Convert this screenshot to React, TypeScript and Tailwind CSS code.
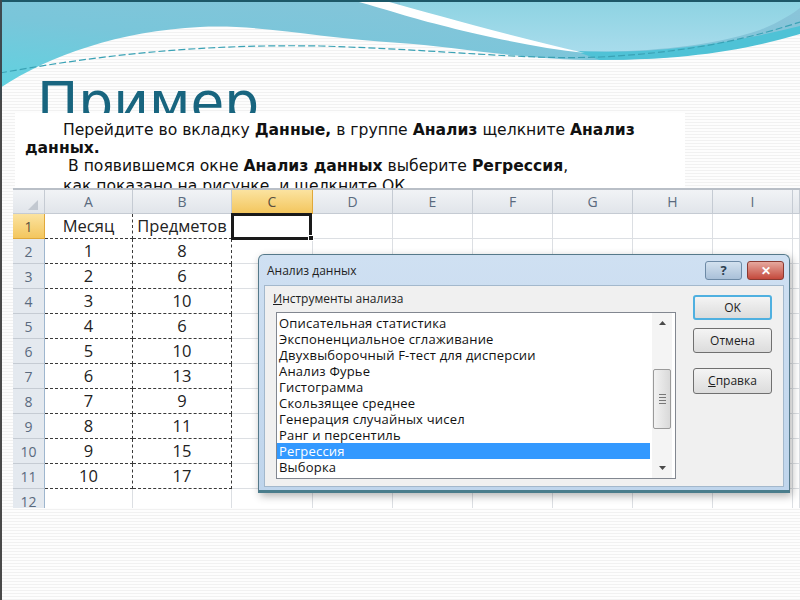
import React from 'react';

const rows: [string, string][] = [
  ['Месяц', 'Предметов'],
  ['1', '8'],
  ['2', '6'],
  ['3', '10'],
  ['4', '6'],
  ['5', '10'],
  ['6', '13'],
  ['7', '9'],
  ['8', '11'],
  ['9', '15'],
  ['10', '17'],
  ['', ''],
];

const tools = [
  'Описательная статистика',
  'Экспоненциальное сглаживание',
  'Двухвыборочный F-тест для дисперсии',
  'Анализ Фурье',
  'Гистограмма',
  'Скользящее среднее',
  'Генерация случайных чисел',
  'Ранг и персентиль',
  'Регрессия',
  'Выборка',
];

const emptyCols = ['D', 'E', 'F', 'G', 'H', 'I', 'J'];

function Wave() {
  return (
    <svg className="absolute left-0 top-0" width="800" height="100" viewBox="0 0 800 100">
      <defs>
        <linearGradient id="cyan" x1="1" y1="0" x2="0" y2="1">
          <stop offset="0" stopColor="#8cc4d9" />
          <stop offset="0.6" stopColor="#79c6da" />
          <stop offset="1" stopColor="#5fd2e0" />
        </linearGradient>
        <linearGradient id="lobe" x1="0" y1="0" x2="0" y2="1">
          <stop offset="0" stopColor="#8dd3e2" />
          <stop offset="1" stopColor="#a8dcec" />
        </linearGradient>
      </defs>
      <path d="M0 0 H800 V30 C740 50 680 60 600 60 C520 60 460 47 400 43 C320 38 260 24 200 27 C120 31 50 55 0 88 Z" fill="url(#cyan)" />
      <path d="M400 6 C460 22 520 40 575 51 C620 53 700 50 760 30 C780 22 792 14 800 8 V0 H400 Z" fill="url(#lobe)" />
      <path d="M575 51 C650 55 730 44 800 26 V34 C740 52 680 60 600 60 Z" fill="#4fc2d6" />
      <path d="M352 0 L382 0 C440 16 510 36 585 53 C520 46 440 26 400 14 C380 8 366 4 352 0 Z" fill="#ffffff" />
      <path d="M0 73 C100 55 200 44 320 46 C450 50 520 60 600 57 C700 52 760 35 800 22" fill="none" stroke="#3aa2b5" strokeWidth="1.2" strokeDasharray="7 3" />
      <rect x="0" y="0" width="800" height="2" fill="#1d5868" />
      <rect x="0" y="0" width="2" height="100" fill="#3e4a50" />
    </svg>
  );
}

function Arrow({ up }: { up?: boolean }) {
  return (
    <svg width="7" height="4" viewBox="0 0 7 4">
      <path d={up ? 'M0 4 L3.5 0 L7 4 Z' : 'M0 0 L3.5 4 L7 0 Z'} fill="#4a4a4a" />
    </svg>
  );
}

function Dialog() {
  return (
    <div className="absolute left-[245px] top-[64px] flex h-[239px] w-[532px] flex-col rounded-t-[6px] border border-[#55798a] border-b-[3px] border-b-[#4a7d8c] bg-[linear-gradient(#cfe0f2,#bfd5ec)] px-[5px] pb-[3px] font-['Open_Sans',sans-serif] shadow-[2px_3px_8px_rgba(0,0,0,0.3)]">
      <div className="flex h-[30px] items-start justify-between">
        <span className="ml-[3px] mt-[8px] text-[12px] leading-[16px] text-[#1e1e1e]">Анализ данных</span>
        <div className="mt-[6px] flex gap-[5px]">
          <div className="flex h-[19px] w-[37px] items-center justify-center rounded-[3px] border border-[#6d8aa6] bg-[linear-gradient(#d3e1ef,#a9c0d8)] text-[13px] font-bold leading-none text-[#2c3e50]">
            ?
          </div>
          <div className="flex h-[19px] w-[37px] items-center justify-center rounded-[3px] border border-[#8a3a32] bg-[linear-gradient(#e6a89e,#c4493c)] text-[12px] font-bold leading-none text-white">
            ✕
          </div>
        </div>
      </div>
      <div className="flex flex-1 border border-[#a3b8cc] bg-[#f0f0f0] pl-[11px]">
        <div className="flex flex-col">
          <div className="-ml-[3px] mt-[5px] text-[12px] leading-[16px] text-[#1e1e1e]">
            <span className="underline">И</span>нструменты анализа
          </div>
          <div className="mt-[5px] flex h-[167px] w-[400px] border border-[#828790] bg-white">
            <div className="w-[373px] pt-[2px] text-[13px] tracking-[0.2px]">
              {tools.map((t) => (
                <div
                  key={t}
                  className={
                    t === 'Регрессия'
                      ? 'h-[16px] bg-[#3399ff] pl-[2px] leading-[16px] text-white'
                      : 'h-[16px] pl-[2px] leading-[16px] text-[#111]'
                  }
                >
                  {t}
                </div>
              ))}
            </div>
            <div className="ml-[2px] flex w-[20px] flex-col items-center bg-[#f4f4f4]">
              <div className="flex h-[20px] items-center">
                <Arrow up />
              </div>
              <div className="mt-[36px] flex h-[60px] w-[18px] flex-col items-center justify-center gap-[2px] rounded-[2px] border border-[#9a9a9a] bg-[linear-gradient(90deg,#f2f2f2,#d9d9d9)]">
                <div className="h-px w-[7px] bg-[#777]" />
                <div className="h-px w-[7px] bg-[#777]" />
                <div className="h-px w-[7px] bg-[#777]" />
                <div className="h-px w-[7px] bg-[#777]" />
              </div>
              <div className="mt-auto flex h-[20px] items-center">
                <Arrow />
              </div>
            </div>
          </div>
        </div>
        <div className="ml-[17px] flex flex-col pt-[9px] text-[12px] text-[#1e1e1e]">
          <div className="flex h-[25px] w-[79px] items-center justify-center rounded-[3px] border-2 border-[#4fb0e0] bg-[linear-gradient(#f4f4f4,#dcdcdc)]">
            OK
          </div>
          <div className="mt-[8px] flex h-[25px] w-[79px] items-center justify-center rounded-[3px] border border-[#707070] bg-[linear-gradient(#f4f4f4,#dcdcdc)]">
            Отмена
          </div>
          <div className="mt-[15px] flex h-[26px] w-[79px] items-center justify-center rounded-[3px] border border-[#707070] bg-[linear-gradient(#f4f4f4,#dcdcdc)]">
            <span>
              <span className="underline">С</span>правка
            </span>
          </div>
        </div>
      </div>
    </div>
  );
}

function Sheet() {
  const head = 'flex items-center justify-center border-r border-b border-[#c5cbd3] bg-[linear-gradient(#f1f3f6,#e1e5ea)] text-[14px] text-[#5a6a7e]';
  const headOn = 'flex items-center justify-center border-r border-b border-[#e0a83a] bg-[linear-gradient(#fbe3a0,#f3c65e)] text-[14px] text-[#5a5040]';
  const rowHead = 'flex items-center justify-center border-r border-b border-r-[#9eb6ce] border-b-[#c5cbd3] bg-[#e4e9ef] text-[14px] text-[#5a6a7e]';
  const grid = 'border-r border-b border-[#dcdfe3] bg-white';
  const data = 'flex items-center justify-center border-r border-b border-dashed border-[#3a3a3a] bg-white text-[16.5px] text-[#222]';

  return (
    <div className="relative ml-[13px] h-[320px] w-[787px] overflow-hidden border-t-2 border-[#b9bfc7] font-['Open_Sans',sans-serif]">
      <div className="grid grid-cols-[32px_88px_99px_81px_80px_80px_80px_80px_80px_80px_7px] grid-rows-[24px_repeat(12,25px)]">
        <div className={head}>
          <svg width="10" height="10" viewBox="0 0 10 10" className="ml-[8px] mt-[6px]">
            <path d="M10 0 L10 10 L0 10 Z" fill="#c2c8d0" />
          </svg>
        </div>
        <div className={head}>A</div>
        <div className={head}>B</div>
        <div className={headOn}>C</div>
        {emptyCols.map((c) => (
          <div key={c} className={head}>
            {c === 'J' ? '' : c}
          </div>
        ))}
        {rows.map(([a, b], i) => {
          const n = i + 1;
          const inData = n <= 11;
          return (
            <React.Fragment key={n}>
              <div className={n === 1 ? headOn : rowHead}>{n}</div>
              <div className={inData ? data : grid + ' flex items-center justify-center'}>{a}</div>
              <div className={inData ? data : grid + ' flex items-center justify-center'}>{b}</div>
              {n === 1 ? (
                <div className="relative border-b border-[#dcdfe3] bg-white">
                  <div className="absolute -left-px -top-px h-[27px] w-[81px] border-[3px] border-[#1a1a1a]" />
                  <div className="absolute -bottom-[3px] -right-[1px] h-[6px] w-[6px] border border-white bg-[#1a1a1a]" />
                </div>
              ) : (
                <div className={grid} />
              )}
              {emptyCols.map((c) => (
                <div key={c} className={grid} />
              ))}
            </React.Fragment>
          );
        })}
      </div>
      <Dialog />
    </div>
  );
}

export default function App() {
  return (
    <div className="relative h-[600px] w-[800px] overflow-hidden bg-[repeating-linear-gradient(180deg,#fdfdfd_0px,#fdfdfd_2px,#f1f1f1_2px,#f1f1f1_3px)] shadow-[inset_2px_0_0_#4a4a4a]">
      <Wave />
      <div className="relative pt-[75px]">
        <h1 className="h-[55px] pl-[37px] font-['DejaVu_Sans',sans-serif] text-[55px] leading-[55px] text-[#18657f]">
          Пример
        </h1>
        <div className="relative -mt-[17px] ml-[15px] h-[75px] w-[670px] overflow-hidden bg-white pl-[10px] pt-[8px] font-['DejaVu_Sans',sans-serif] text-[15.6px] leading-[18px] text-[#111]">
          <div className="pl-[38px]">
            Перейдите во вкладку <b>Данные,</b> в группе <b>Анализ</b> щелкните <b>Анализ</b>
          </div>
          <div>
            <b>данных.</b>
          </div>
          <div className="pl-[43px]">
            В появившемся окне <b>Анализ данных</b> выберите <b>Регрессия</b>,
          </div>
          <div className="mt-[2px] pl-[38px]">как показано на рисунке, и щелкните ОК.</div>
        </div>
        <Sheet />
      </div>
    </div>
  );
}
